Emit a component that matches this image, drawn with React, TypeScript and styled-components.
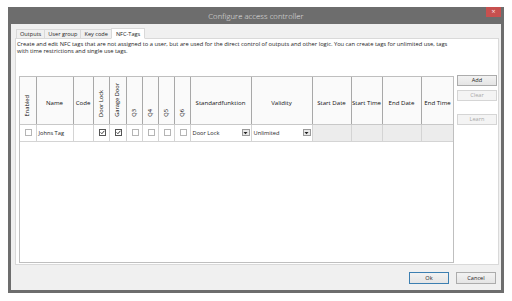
import React from 'react';
import styled, { createGlobalStyle } from 'styled-components';

const GlobalStyle = createGlobalStyle`
  html, body {
    margin: 0;
    padding: 0;
    background: #ffffff;
  }
  body {
    font-family: "Open Sans", "Noto Sans", sans-serif;
    color: #1e1e1e;
  }
`;

interface Column {
  title: string;
  width: number;
  vertical?: boolean;
}

const columns: Column[] = [
  { title: 'Enabled', width: 16, vertical: true },
  { title: 'Name', width: 37 },
  { title: 'Code', width: 20 },
  { title: 'Door Lock', width: 16, vertical: true },
  { title: 'Garage Door', width: 17, vertical: true },
  { title: 'Q3', width: 16, vertical: true },
  { title: 'Q4', width: 16, vertical: true },
  { title: 'Q5', width: 16, vertical: true },
  { title: 'Q6', width: 16, vertical: true },
  { title: 'Standardfunktion', width: 61 },
  { title: 'Validity', width: 61 },
  { title: 'Start Date', width: 39 },
  { title: 'Start Time', width: 31 },
  { title: 'End Date', width: 39 },
  { title: 'End Time', width: 33 },
];

const tabs = ['Outputs', 'User group', 'Key code', 'NFC-Tags'];

function CheckBox({ checked }: { checked?: boolean }) {
  return (
    <Box checked={checked}>
      {checked && (
        <svg width="5" height="5" viewBox="0 0 5 5">
          <path d="M0.6 2.4 L1.9 3.7 L4.4 0.8" fill="none" stroke="#222" strokeWidth="0.9" />
        </svg>
      )}
    </Box>
  );
}

function Combo({ value }: { value: string }) {
  return (
    <ComboWrap>
      <span>{value}</span>
      <ComboArrow>
        <svg width="5" height="4" viewBox="0 0 5 4">
          <path d="M0.5 1 L4.5 1 L2.5 3.2 Z" fill="#222" />
        </svg>
      </ComboArrow>
    </ComboWrap>
  );
}

export default function App() {
  return (
    <>
      <GlobalStyle />
      <Page>
        <Window>
          <TitleBar>
            <span />
            <Title>Configure access controller</Title>
            <CloseButton>×</CloseButton>
          </TitleBar>

          <Body>
            <TabStrip>
              {tabs.map((tab) => (
                <Tab key={tab} active={tab === 'NFC-Tags'}>
                  {tab}
                </Tab>
              ))}
            </TabStrip>

            <Panel>
              <Description>
                Create and edit NFC tags that are not assigned to a user, but are used for the direct
                control of outputs and other logic. You can create tags for unlimited use, tags
                <br />
                with time restrictions and single use tags.
              </Description>

              <Content>
                <GridBox>
                  <Table>
                    <colgroup>
                      {columns.map((c) => (
                        <col key={c.title} style={{ width: c.width }} />
                      ))}
                    </colgroup>
                    <thead>
                      <tr>
                        {columns.map((c) => (
                          <HeadCell key={c.title} vertical={c.vertical}>
                            {c.vertical ? <Vertical>{c.title}</Vertical> : c.title}
                          </HeadCell>
                        ))}
                      </tr>
                    </thead>
                    <tbody>
                      <tr>
                        <Cell center>
                          <CheckBox />
                        </Cell>
                        <Cell>Johns Tag</Cell>
                        <Cell />
                        <Cell center>
                          <CheckBox checked />
                        </Cell>
                        <Cell center>
                          <CheckBox checked />
                        </Cell>
                        <Cell center>
                          <CheckBox />
                        </Cell>
                        <Cell center>
                          <CheckBox />
                        </Cell>
                        <Cell center>
                          <CheckBox />
                        </Cell>
                        <Cell center>
                          <CheckBox />
                        </Cell>
                        <Cell>
                          <Combo value="Door Lock" />
                        </Cell>
                        <Cell>
                          <Combo value="Unlimited" />
                        </Cell>
                        <Cell disabled />
                        <Cell disabled />
                        <Cell disabled />
                        <Cell disabled />
                      </tr>
                    </tbody>
                  </Table>
                </GridBox>

                <SideButtons>
                  <Button>Add</Button>
                  <Button disabled>Clear</Button>
                  <Spacer />
                  <Button disabled>Learn</Button>
                </SideButtons>
              </Content>
            </Panel>

            <Footer>
              <Button primary>Ok</Button>
              <Button>Cancel</Button>
            </Footer>
          </Body>
        </Window>
      </Page>
    </>
  );
}

const Page = styled.div`
  padding: 7px 0 0 8px;
`;

const Window = styled.div`
  width: 496px;
  height: 286px;
  box-sizing: border-box;
  background: #6d6d6d;
  padding: 0 3px 3px;
  display: flex;
  flex-direction: column;
`;

const TitleBar = styled.div`
  height: 17px;
  display: grid;
  grid-template-columns: 1fr auto 1fr;
  align-items: center;
`;

const Title = styled.span`
  font-size: 7.6px;
  font-weight: 300;
  color: #e6e6e6;
  letter-spacing: 0.1px;
`;

const CloseButton = styled.div`
  justify-self: end;
  align-self: start;
  width: 15px;
  height: 10px;
  background: #c7504f;
  color: #fbe3e3;
  font-size: 7px;
  line-height: 10px;
  text-align: center;
`;

const Body = styled.div`
  flex: 1;
  background: #f0f0f0;
  display: flex;
  flex-direction: column;
  padding: 4px 2px 0 4px;
`;

const TabStrip = styled.div`
  display: flex;
  align-items: flex-end;
  padding-left: 1px;
  height: 11px;
  position: relative;
  z-index: 1;
  margin-bottom: -1px;
`;

const Tab = styled.div<{ active?: boolean }>`
  font-size: 5.6px;
  height: ${({ active }) => (active ? 11 : 10)}px;
  line-height: ${({ active }) => (active ? 10 : 9)}px;
  box-sizing: border-box;
  padding: 0 ${({ active }) => (active ? 4 : 3)}px;
  border: 1px solid #d9d9d9;
  border-bottom-color: ${({ active }) => (active ? '#ffffff' : '#d9d9d9')};
  background: ${({ active }) => (active ? '#ffffff' : '#f0f0f0')};
  & + & {
    margin-left: ${({ active }) => (active ? -1 : 1)}px;
  }
`;

const Panel = styled.div`
  flex: 1;
  background: #ffffff;
  border: 1px solid #d9d9d9;
  display: flex;
  flex-direction: column;
  padding: 2px 1px 1px 1px;
`;

const Description = styled.div`
  font-size: 5.75px;
  line-height: 7px;
  white-space: nowrap;
  height: 34px;
`;

const Content = styled.div`
  flex: 1;
  display: flex;
  gap: 3px;
  padding-left: 2px;
`;

const GridBox = styled.div`
  width: 435px;
  box-sizing: border-box;
  border: 1px solid #bfbfbf;
  background: #ffffff;
  overflow: hidden;
  margin-top: 1px;
`;

const Table = styled.table`
  border-collapse: collapse;
  table-layout: fixed;
  width: 434px;
  font-size: 5.7px;
`;

const HeadCell = styled.th<{ vertical?: boolean }>`
  height: 47px;
  box-sizing: border-box;
  padding: ${({ vertical }) => (vertical ? '0 0 7px' : '4px 0 0')};
  vertical-align: ${({ vertical }) => (vertical ? 'bottom' : 'middle')};
  text-align: center;
  font-size: 6.1px;
  font-weight: 400;
  color: #111111;
  background: #fafafa;
  border-right: 1px solid #a8a8a8;
  border-bottom: 1px solid #c8c8c8;
  white-space: nowrap;
  overflow: hidden;
`;

const Vertical = styled.div`
  writing-mode: vertical-rl;
  transform: rotate(180deg);
  margin: 0 auto;
  line-height: 7px;
  font-size: 5.7px;
`;

const Cell = styled.td<{ center?: boolean; disabled?: boolean }>`
  height: 17px;
  box-sizing: border-box;
  padding: 0 0 0 2px;
  text-align: ${({ center }) => (center ? 'center' : 'left')};
  background: ${({ disabled }) => (disabled ? '#ececec' : '#ffffff')};
  border-right: 1px solid #d4d4d4;
  border-bottom: 1px solid #d4d4d4;
  white-space: nowrap;
  overflow: hidden;
`;

const Box = styled.span<{ checked?: boolean }>`
  display: inline-flex;
  align-items: center;
  justify-content: center;
  width: 7px;
  height: 7px;
  box-sizing: border-box;
  vertical-align: middle;
  border: 1px solid ${({ checked }) => (checked ? '#555555' : '#b5b5b5')};
  background: #ffffff;
`;

const ComboWrap = styled.div`
  display: flex;
  align-items: center;
  justify-content: space-between;
  padding-right: 1px;
`;

const ComboArrow = styled.span`
  display: flex;
  align-items: center;
  justify-content: center;
  width: 8px;
  height: 7px;
  box-sizing: border-box;
  border: 1px solid #9a9a9a;
  background: #e8e8e8;
`;

const SideButtons = styled.div`
  display: flex;
  flex-direction: column;
  gap: 4px;
`;

const Spacer = styled.div`
  height: 5px;
`;

const Button = styled.button<{ primary?: boolean }>`
  width: 40px;
  height: 11px;
  padding: 0;
  font-family: inherit;
  font-size: 5.6px;
  line-height: 9px;
  color: #222222;
  background: linear-gradient(#f2f2f2, #e5e5e5);
  border: 1px solid ${({ primary }) => (primary ? '#3c7fb1' : '#acacac')};
  &:disabled {
    color: #a8a8a8;
    background: #f4f4f4;
    border-color: #d5d5d5;
  }
`;

const Footer = styled.div`
  height: 25px;
  display: flex;
  justify-content: flex-end;
  align-items: center;
  gap: 7px;
  padding-right: 3px;
  padding-top: 1px;
  box-sizing: border-box;
  & > button {
    height: 12px;
  }
`;
